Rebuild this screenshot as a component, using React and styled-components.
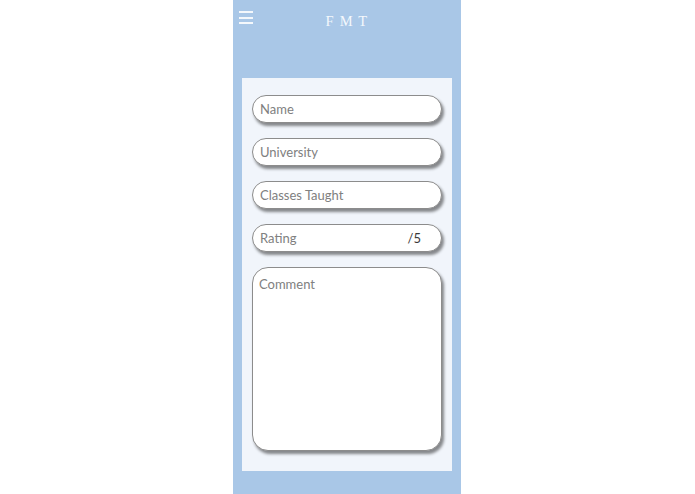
import React from "react";
import styled, { createGlobalStyle } from "styled-components";

const Global = createGlobalStyle`
  html, body { margin: 0; padding: 0; background: #ffffff; }
  body { font-family: "Lato", "Open Sans", sans-serif; }
  * { box-sizing: border-box; }
`;

const Page = styled.div`
  display: flex;
  justify-content: center;
  width: 100%;
  height: 494px;
  padding-right: 1px;
`;

const Phone = styled.div`
  width: 228px;
  height: 494px;
  background: #a9c7e7;
  display: flex;
  flex-direction: column;
`;

const Header = styled.header`
  height: 78px;
  display: grid;
  grid-template-columns: 28px 1fr 28px;
  align-items: start;
`;

const Burger = styled.button`
  margin: 11px 0 0 6px;
  padding: 0;
  width: 14px;
  height: 13px;
  border: none;
  background: transparent;
  display: flex;
  flex-direction: column;
  justify-content: space-between;
  cursor: pointer;
`;

const BurgerLine = styled.span`
  display: block;
  height: 2px;
  width: 14px;
  background: #f4f8fc;
`;

const Title = styled.h1`
  margin: 13px 0 0 0;
  text-align: center;
  font-family: "Liberation Serif", "DejaVu Serif", serif;
  font-weight: normal;
  font-size: 14.5px;
  letter-spacing: 1.2px;
  color: #f4f8fc;
  line-height: 17px;
`;

const Card = styled.form`
  margin: 0 9px;
  height: 393px;
  background: #f1f5fb;
  padding: 17px 10px 20px 10px;
  display: flex;
  flex-direction: column;
  gap: 15px;
`;

const fieldBase = `
  width: 100%;
  background: #ffffff;
  border: 1px solid #8c8c8c;
  box-shadow: 2px 3px 3px rgba(0, 0, 0, 0.45);
  font-family: "Lato", "Open Sans", sans-serif;
  font-size: 13px;
  color: #333333;
  outline: none;
`;

const TextInput = styled.input`
  ${fieldBase}
  height: 28px;
  border-radius: 14px;
  padding: 0 7px;
  &::placeholder { color: #808080; }
`;

const RatingField = styled.label`
  ${fieldBase}
  height: 28px;
  border-radius: 14px;
  padding: 0 20px 0 7px;
  display: flex;
  align-items: center;
`;

const BareInput = styled.input`
  flex: 1;
  min-width: 0;
  border: none;
  background: transparent;
  outline: none;
  padding: 0;
  font-family: inherit;
  font-size: 13px;
  color: #333333;
  &::placeholder { color: #808080; }
`;

const OutOf = styled.span`
  color: #3a3a3a;
  font-size: 13px;
`;

const Comment = styled.textarea`
  ${fieldBase}
  flex: 1;
  resize: none;
  border-radius: 16px;
  padding: 8px 6px;
  &::placeholder { color: #808080; }
`;

export default function App() {
  return (
    <>
      <Global />
      <Page>
        <Phone>
          <Header>
            <Burger type="button" aria-label="menu">
              <BurgerLine />
              <BurgerLine />
              <BurgerLine />
            </Burger>
            <Title>F M T</Title>
            <span />
          </Header>
          <Card onSubmit={(e) => e.preventDefault()}>
            <TextInput placeholder="Name" />
            <TextInput placeholder="University" />
            <TextInput placeholder="Classes Taught" />
            <RatingField>
              <BareInput placeholder="Rating" />
              <OutOf>/5</OutOf>
            </RatingField>
            <Comment placeholder="Comment" />
          </Card>
        </Phone>
      </Page>
    </>
  );
}
